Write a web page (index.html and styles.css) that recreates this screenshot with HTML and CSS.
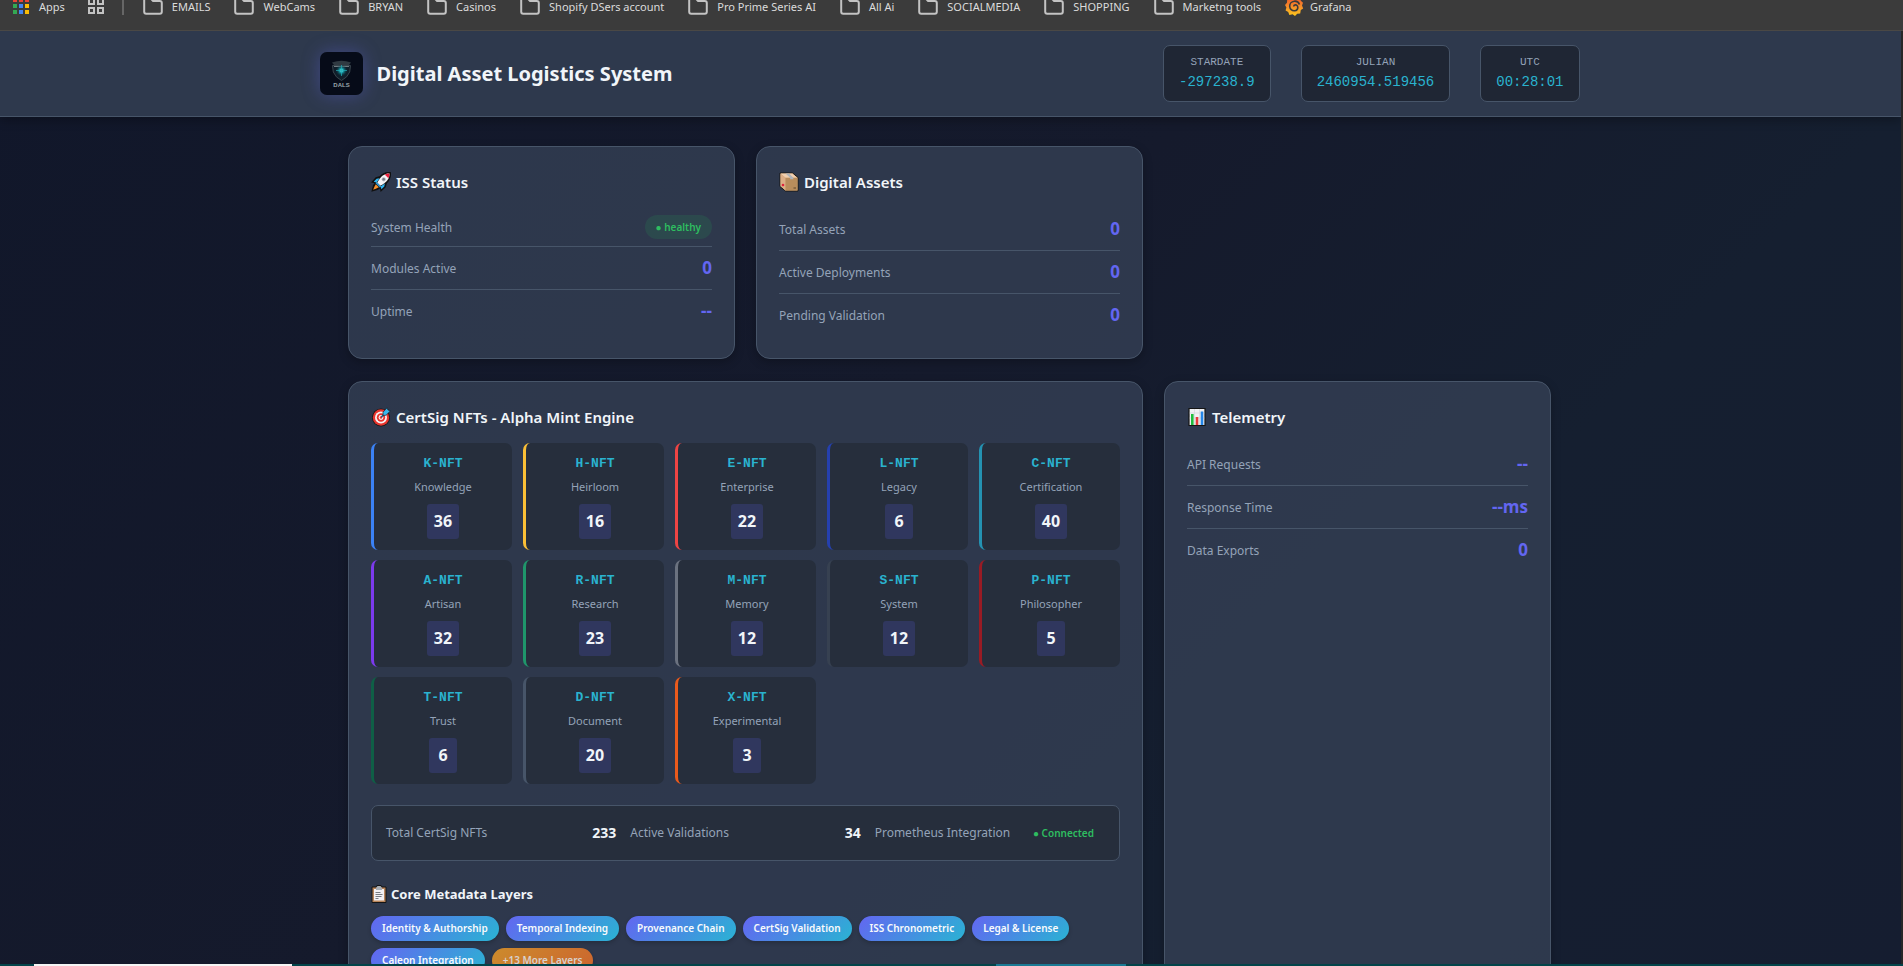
FILE: index.html
```html
<!DOCTYPE html>
<html lang="en">
<head>
<meta charset="utf-8">
<title>Digital Asset Logistics System</title>
<link rel="stylesheet" href="styles.css">
</head>
<body>
<svg class="defs" width="0" height="0" aria-hidden="true">
  <symbol id="folder" viewBox="0 0 20 18"><path d="M1.200 3.200c0-1.100.8-2 2-2h4.300l2.600 2.900h6.700c1.200 0 2 .8 2 2v8.600c0 1.200-.8 2-2 2H3.200c-1.200 0-2-.8-2-2z" fill="none" stroke="#c3c3c3" stroke-width="2"/></symbol>
</svg>

<nav class="bookmarks" aria-label="Bookmarks">
  <a href="#" class="bookmark">
    <svg width="18" height="18" viewBox="0 0 18 18"><path fill="#ea4335" d="M1 1h4v4H1zM7 1h4v4H7zM13 1h4v4h-4z"/><path fill="#34a853" d="M1 7h4v4H1z"/><path fill="#4285f4" d="M7 7h4v4H7z"/><path fill="#fbbc05" d="M13 7h4v4h-4z"/><path fill="#34a853" d="M1 13h4v4H1z"/><path fill="#4285f4" d="M7 13h4v4H7z"/><path fill="#fbbc05" d="M13 13h4v4h-4z"/></svg>
    <span>Apps</span></a>
  <button class="grid-button" aria-label="Tab groups"><svg width="18" height="18" viewBox="0 0 18 18" fill="none" stroke="#c3c3c3" stroke-width="2"><path d="M2 2h5v5H2zM11 2h5v5h-5zM2 11h5v5H2zM11 11h5v5h-5z"/></svg></button>
  <span class="divider"></span>
  <a href="#" class="bookmark"><svg width="20" height="18"><use href="#folder"/></svg><span>EMAILS</span></a>
  <a href="#" class="bookmark"><svg width="20" height="18"><use href="#folder"/></svg><span>WebCams</span></a>
  <a href="#" class="bookmark"><svg width="20" height="18"><use href="#folder"/></svg><span>BRYAN</span></a>
  <a href="#" class="bookmark"><svg width="20" height="18"><use href="#folder"/></svg><span>Casinos</span></a>
  <a href="#" class="bookmark"><svg width="20" height="18"><use href="#folder"/></svg><span>Shopify DSers account</span></a>
  <a href="#" class="bookmark"><svg width="20" height="18"><use href="#folder"/></svg><span>Pro Prime Series AI</span></a>
  <a href="#" class="bookmark"><svg width="20" height="18"><use href="#folder"/></svg><span>All Ai</span></a>
  <a href="#" class="bookmark"><svg width="20" height="18"><use href="#folder"/></svg><span>SOCIALMEDIA</span></a>
  <a href="#" class="bookmark"><svg width="20" height="18"><use href="#folder"/></svg><span>SHOPPING</span></a>
  <a href="#" class="bookmark"><svg width="20" height="18"><use href="#folder"/></svg><span>Marketng tools</span></a>
  <a href="#" class="bookmark grafana">
    <svg width="19" height="20" viewBox="0 0 19 20"><defs><linearGradient id="gf" x1="0" y1="1" x2="0" y2="0"><stop offset="0" stop-color="#fcc91d"/><stop offset=".5" stop-color="#f58a2a"/><stop offset="1" stop-color="#f0502a"/></linearGradient></defs><path fill="url(#gf)" d="M9 0l2.500 2 3.500-.3.800 3 2.200 2-1 2.800 1.200 3-2.400 1.600-.6 3.400-3 .2L10 20l-2.400-1.800-3.200.8-1.200-3L.6 14.600l.8-3L0 9l2-2.200.2-3.300 3.200-.6z"/><path fill="none" stroke="#3b3b3b" stroke-width="1.600" d="M14.500 8.500c-.8-2.300-2.800-3.500-5.200-3.300-2.900.3-4.800 2.600-4.600 5.300.2 2.600 2.300 4.500 4.800 4.300 2-.2 3.400-1.700 3.300-3.500-.1-1.500-1.200-2.500-2.500-2.400-1 .1-1.600.8-1.600 1.700"/></svg>
    <span>Grafana</span></a>
</nav>

<div class="viewport">
<header class="header">
  <div class="header-inner">
    <div class="brand">
      <svg class="logo" viewBox="0 0 43 43" role="img" aria-label="DALS">
        <defs><radialGradient id="glow"><stop offset="0" stop-color="#7ffcff"/><stop offset=".35" stop-color="#159aa5"/><stop offset="1" stop-color="#0a2530" stop-opacity="0"/></radialGradient></defs>
        <rect width="43" height="43" fill="#060b18"/>
        <path d="M12 10.500q9.500-3.500 19 0l-2 2.500H14z" fill="#303a42"/>
        <path d="M12.500 13.500h18l-.8 6.500q-2.200 5.500-8.200 8.500-6-3-8.200-8.500z" fill="#101e2a" stroke="#38444c"/>
        <path d="M14 14.500h15" stroke="#707b82"/>
        <circle cx="21.500" cy="18.500" r="6" fill="url(#glow)"/>
        <path d="M21.500 13v11M16 18.500h11" stroke="#22aeb8" stroke-width=".7"/>
        <text class="logo-text" x="21.500" y="34.500" text-anchor="middle">DALS</text>
      </svg>
      <h1>Digital Asset Logistics System</h1>
    </div>
    <div class="clocks">
      <div class="clock"><span class="clock-label">STARDATE</span><span class="clock-value">-297238.9</span></div>
      <div class="clock"><span class="clock-label">JULIAN</span><span class="clock-value">2460954.519456</span></div>
      <div class="clock"><span class="clock-label">UTC</span><span class="clock-value">00:28:01</span></div>
    </div>
  </div>
</header>

<main class="dashboard">
  <section class="card">
    <h2><svg class="icon" viewBox="0 0 20 20"><path d="M19.300.7c-4-.5-7.500.8-10.300 4L5 5.800 1.200 10l3.300.6-2 3.200L1.200 18.800l5-1.300 3.200-2 .6 3.300 4.200-3.800 1.100-4c3.200-2.800 4.500-6.300 4-10.300z" fill="#111" stroke="#111" stroke-width="1.200"/><path d="M5.600 6.800l3-.5-3 4.200-2.900-.8zM13.300 14.400l.5-3-4.200 3 .8 2.900z" fill="#2fb4f0"/><path d="M18.500 1.500c-4.500-.2-8.700 2.200-12.300 9.300l3 3c7.100-3.600 9.500-7.800 9.300-12.300z" fill="#f4f4f6"/><path d="M18.500 1.500c-1.700 0-3.300.3-4.800 1.100l3.700 3.700c.8-1.500 1.100-3.100 1.100-4.800z" fill="#e81f3c"/><circle cx="12.700" cy="7.300" r="2.100" fill="#b9bcc4"/><circle cx="12.700" cy="7.300" r="1.200" fill="#747985"/><path d="M4.800 12.200l3 3-2.500 1.200-3.100 1.400 1.300-3.200z" fill="#f7902b"/><path d="M5.600 9.800l4.600 4.600-1.400 1-4.200-4.200z" fill="#3196d1"/></svg>ISS Status</h2>
    <div class="metric"><span>System Health</span><span class="status">● healthy</span></div>
    <div class="metric"><span>Modules Active</span><strong>0</strong></div>
    <div class="metric"><span>Uptime</span><strong>--</strong></div>
  </section>

  <section class="card">
    <h2><svg class="icon" viewBox="0 0 20 20"><path d="M1 1h12.500l5.500 4.500v13.500H6.500L1 14.500z" fill="#d9ab7b" stroke="#151515"/><path d="M1.500 1.500h11.800l5 4.300H6.500z" fill="#f0cfaf"/><path d="M1.500 1.800l5 4v12.700l-5-4.200z" fill="#dcae86"/><path d="M6.500 5.800h12v12.700h-12z" fill="#b98d5c"/><path d="M6.500 1.500h3.600l4.200 4.300v1.500h-3.200V5.800z" fill="#aeb3b8"/><circle cx="4" cy="13" r="1.300" fill="#e0243e"/><path d="M14.500 16h2.500" stroke="#5c442b"/></svg>Digital Assets</h2>
    <div class="metric"><span>Total Assets</span><strong>0</strong></div>
    <div class="metric"><span>Active Deployments</span><strong>0</strong></div>
    <div class="metric"><span>Pending Validation</span><strong>0</strong></div>
  </section>

  <section class="card wide">
    <h2><svg class="icon" viewBox="0 0 20 20"><circle cx="10" cy="10.500" r="9" fill="#151515"/><circle cx="10" cy="10.500" r="8.200" fill="#e8352e"/><circle cx="10" cy="10.500" r="6" fill="#f6f3f4"/><circle cx="10" cy="10.500" r="4.200" fill="#e8352e"/><circle cx="10" cy="10.500" r="2.400" fill="#f6f3f4"/><circle cx="10" cy="10.500" r="1.200" fill="#e8352e"/><path d="M10.300 10.200l3.900-4.400" stroke="#1b5c80" stroke-width="1.500"/><path d="M12 5.200L16 .8l1 2.200 2.500.8-4.400 4.400-3 .3z" fill="#3ab8ec" stroke="#17202a" stroke-width=".7"/></svg>CertSig NFTs - Alpha Mint Engine</h2>
    <ul class="nfts">
      <li class="nft knowledge"><code>K-NFT</code><span>Knowledge</span><strong>36</strong></li>
      <li class="nft heirloom"><code>H-NFT</code><span>Heirloom</span><strong>16</strong></li>
      <li class="nft enterprise"><code>E-NFT</code><span>Enterprise</span><strong>22</strong></li>
      <li class="nft legacy"><code>L-NFT</code><span>Legacy</span><strong>6</strong></li>
      <li class="nft certification"><code>C-NFT</code><span>Certification</span><strong>40</strong></li>
      <li class="nft artisan"><code>A-NFT</code><span>Artisan</span><strong>32</strong></li>
      <li class="nft research"><code>R-NFT</code><span>Research</span><strong>23</strong></li>
      <li class="nft memory"><code>M-NFT</code><span>Memory</span><strong>12</strong></li>
      <li class="nft system"><code>S-NFT</code><span>System</span><strong>12</strong></li>
      <li class="nft philosopher"><code>P-NFT</code><span>Philosopher</span><strong>5</strong></li>
      <li class="nft trust"><code>T-NFT</code><span>Trust</span><strong>6</strong></li>
      <li class="nft document"><code>D-NFT</code><span>Document</span><strong>20</strong></li>
      <li class="nft experimental"><code>X-NFT</code><span>Experimental</span><strong>3</strong></li>
    </ul>
    <div class="summary">
      <div><span>Total CertSig NFTs</span><strong>233</strong></div>
      <div><span>Active Validations</span><strong>34</strong></div>
      <div><span>Prometheus Integration</span><span class="connected">● Connected</span></div>
    </div>
    <h3><svg class="clipboard" viewBox="0 0 16 18"><path d="M1 2h4l1-1.500h4L11 2h4v15.500H1z" fill="#151515" stroke="#151515"/><path d="M1.500 2.500h13v14.500h-13z" fill="#b9855a"/><path d="M3 4h10v11.500H3z" fill="#f3f1f4"/><path d="M5 2.700L6.500 1h3L11 2.700V5H5z" fill="#a9adb3"/><path d="M4.500 7.500h5M4.500 9.500h7M4.500 11.500h6M4.500 13.500h3" stroke="#777b82"/></svg>Core Metadata Layers</h3>
    <ul class="chips">
      <li>Identity &amp; Authorship</li><li>Temporal Indexing</li><li>Provenance Chain</li><li>CertSig Validation</li><li>ISS Chronometric</li><li>Legal &amp; License</li><li>Caleon Integration</li><li class="more">+13 More Layers</li>
    </ul>
  </section>

  <section class="card">
    <h2><svg class="icon" viewBox="0 0 20 20"><path d="M2 1.500h16v17H2z" fill="#f1f1f3" stroke="#151515" stroke-width="1.200"/><path d="M2.700 6h14.600M2.700 11h14.600M7.500 2v16M12.500 2v16" stroke="#d0d1d8" stroke-width=".6"/><path d="M4 7h2.600v11H4z" fill="#20bd3c"/><path d="M8.700 10h2.600v8H8.700z" fill="#e83a3a"/><path d="M13.700 4.500h2.600V18h-2.600z" fill="#2586e8"/></svg>Telemetry</h2>
    <div class="metric"><span>API Requests</span><strong>--</strong></div>
    <div class="metric"><span>Response Time</span><strong>--ms</strong></div>
    <div class="metric"><span>Data Exports</span><strong>0</strong></div>
  </section>
</main>
</div>

<footer class="taskbar"><span class="taskbar-search"></span><span class="taskbar-active"></span></footer>
</body>
</html>
```
FILE: styles.css
```css
* { box-sizing: border-box; }

body {
  display: flex;
  flex-direction: column;
  height: 100vh;
  margin: 0;
  overflow: hidden;
  background: #272727;
  color: #f1f5f9;
  font-family: "Noto Sans", "Open Sans", sans-serif;
}

h1, h2, h3, ul { margin: 0; padding: 0; }
ul { list-style: none; }
.defs { position: absolute; }

/* Bookmarks strip */
.bookmarks {
  display: flex;
  flex: none;
  align-items: flex-start;
  gap: 22px;
  height: 31px;
  padding-left: 12px;
  overflow: hidden;
  border-bottom: 1px solid #4a4845;
  background: #3b3b3b;
}
.bookmark, .grid-button {
  display: flex;
  align-items: center;
  gap: 9px;
  height: 20px;
  margin-top: -4px;
  color: #dcdcdc;
  font-size: 11px;
  line-height: 20px;
  white-space: nowrap;
  text-decoration: none;
}
.bookmark span { padding-top: 2px; }
.divider ~ .bookmark { margin-right: 2px; }
.grid-button { padding: 0; border: 0; background: none; }
.divider { width: 2px; height: 15px; margin: 0 -3px 0 -5px; background: #666; }
.grafana { gap: 6px; }

/* Page area */
.viewport {
  flex: 1;
  min-height: 0;
  margin-right: 2px;
  overflow: hidden;
  background: linear-gradient(135deg, #11172a 0%, #151a2c 45%, #151f30 70%, #151d30 100%);
}

.header {
  height: 86px;
  border-bottom: 1px solid #475569;
  background: #2e394d;
  box-shadow: 0 3px 10px rgba(0, 0, 0, .3);
}
.header-inner {
  display: flex;
  align-items: center;
  justify-content: space-between;
  max-width: 1262px;
  height: 100%;
  margin: 0 auto;
  padding-right: 2px;
}
.brand { display: flex; align-items: center; gap: 14px; }
.logo {
  width: 43px;
  height: 43px;
  border-radius: 7px;
  box-shadow: 0 0 18px rgba(99, 102, 241, .35);
}
.logo-text { fill: #9aa5ab; font: bold 6px "Liberation Sans", sans-serif; }
h1 { font-size: 20px; line-height: 30px; }

.clocks { display: flex; gap: 30px; font-family: "Liberation Mono", monospace; }
.clock {
  display: flex;
  flex-direction: column;
  align-items: center;
  height: 57px;
  padding: 7px 15px;
  border: 1px solid #475569;
  border-radius: 7px;
  background: #1f2634;
}
.clock-label { color: #94a3b8; font-size: 11px; line-height: 18px; }
.clock-value { color: #2ab3cf; font-size: 14px; line-height: 22px; }

/* Cards */
.dashboard {
  display: grid;
  grid-template-columns: repeat(3, 1fr);
  gap: 22px 21px;
  max-width: 1205px;
  margin: 29px auto 0;
  padding-right: 2px;
}
.card {
  min-width: 0;
  padding: 22px;
  border: 1px solid #475569;
  border-radius: 14px;
  background: rgba(52, 64, 85, .8);
  box-shadow: 0 3px 10px rgba(0, 0, 0, .25);
}
.wide { grid-column: span 2; min-height: 640px; }
h2 {
  display: flex;
  align-items: center;
  gap: 5px;
  margin-bottom: 13px;
  font-size: 15px;
  font-weight: 600;
  line-height: 26px;
}
.icon { width: 20px; height: 20px; }

.metric {
  display: flex;
  align-items: center;
  justify-content: space-between;
  padding: 7px 0;
  border-bottom: 1px solid #475569;
  color: #94a3b8;
  font-size: 12px;
}
.metric:last-child { border-bottom: 0; }
.metric strong { color: #6366f1; font-family: "Open Sans", "Noto Sans", sans-serif; font-size: 17px; line-height: 28px; }
.status {
  padding: 0 11px;
  border-radius: 12px;
  background: rgba(34, 197, 94, .12);
  color: #2ebd60;
  font-size: 10px;
  font-weight: 600;
  line-height: 24px;
}

/* NFT tiles */
.nfts { display: grid; grid-template-columns: repeat(5, 1fr); gap: 10px 11px; }
.nft {
  display: flex;
  flex-direction: column;
  align-items: center;
  padding: 12px 11px 11px;
  border-left: 3px solid;
  border-radius: 7px;
  background: #262e3c;
}
.nft code {
  margin-bottom: 3px;
  color: #2ab3cf;
  font: bold 13px/18px "Liberation Mono", monospace;
}
.nft span { margin-bottom: 6px; color: #94a3b8; font-size: 11px; line-height: 22px; }
.nft strong {
  min-width: 28px;
  padding: 0 7px;
  border-radius: 3px;
  background: #30375e;
  color: #f1f5f9;
  font-size: 16px;
  line-height: 35px;
  text-align: center;
}
.knowledge { border-color: #3b82f6; }
.heirloom { border-color: #fbbf36; }
.enterprise { border-color: #ef4444; }
.legacy { border-color: #2540af; }
.certification { border-color: #2492b2; }
.artisan { border-color: #7c3aed; }
.research { border-color: #1f966b; }
.memory { border-color: #6b7280; }
.system { border-color: #374151; }
.philosopher { border-color: #991b24; }
.trust { border-color: #0f5f46; }
.document { border-color: #475569; }
.experimental { border-color: #ea5a1c; }

.summary {
  display: grid;
  grid-template-columns: repeat(3, 1fr);
  gap: 14px;
  margin-top: 21px;
  padding: 14px;
  border: 1px solid #475569;
  border-radius: 7px;
  background: #262e3c;
  color: #94a3b8;
  font-size: 12px;
  line-height: 26px;
}
.summary div { display: flex; justify-content: space-between; }
.summary strong { color: #f1f5f9; font-size: 14px; }
.summary .connected { padding-right: 11px; color: #2ebd60; font-size: 10px; font-weight: 600; }

h3 {
  display: flex;
  align-items: center;
  gap: 4px;
  margin: 22px 0 11px;
  font-size: 13px;
  line-height: 22px;
}
.clipboard { width: 16px; height: 18px; }

.chips { display: flex; flex-wrap: wrap; gap: 7px; }
.chips li {
  padding: 0 11px;
  border-radius: 13px;
  background: linear-gradient(135deg, #6366f1, #2ab3d3);
  box-shadow: 0 2px 4px rgba(0, 0, 0, .2);
  color: #f8fafc;
  font-size: 10px;
  font-weight: 600;
  line-height: 25px;
}
.chips .more { background: linear-gradient(135deg, #cc8b2c, #cc652f); color: #d8d2cd; }

/* Desktop taskbar edge */
.taskbar { display: flex; flex: none; height: 2px; background: #03444a; }
.taskbar-search { flex: none; width: 258px; margin: 0 704px 0 34px; background: #f5f5f5; }
.taskbar-active { flex: none; width: 130px; background: #1a7a94; }
```
